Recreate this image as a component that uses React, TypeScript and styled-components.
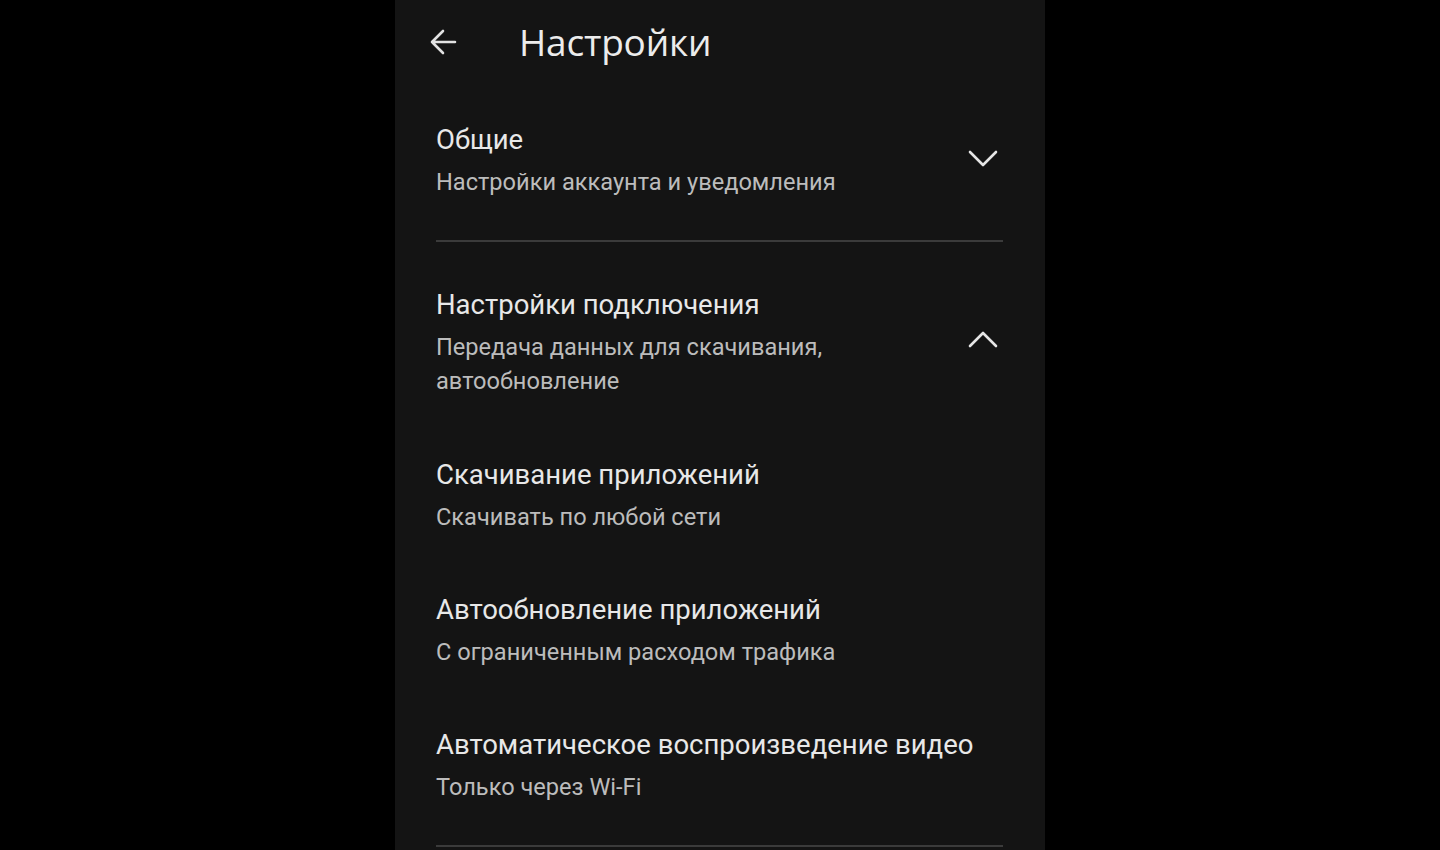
import styled, { createGlobalStyle } from 'styled-components';

const GlobalStyle = createGlobalStyle`
  html, body {
    margin: 0;
    padding: 0;
    background: #000;
  }
  body {
    font-family: Roboto, 'Noto Sans', Arial, sans-serif;
    -webkit-font-smoothing: antialiased;
  }
`;

const Page = styled.div`
  min-height: 850px;
  display: flex;
  justify-content: center;
  background: #000;
`;

const Screen = styled.div`
  width: 650px;
  height: 850px;
  background: #141414;
  overflow: hidden;
  box-sizing: border-box;
  padding: 0 42px 0 41px;
`;

const Header = styled.header`
  display: flex;
  align-items: center;
  padding-top: 20px;
  height: 44px;
  margin-bottom: 58px;
`;

const BackButton = styled.button`
  background: none;
  border: 0;
  padding: 0;
  margin-left: -9px;
  width: 32px;
  height: 32px;
  display: flex;
  align-items: center;
  justify-content: center;
  color: #e2e2e2;
  cursor: pointer;
`;

const Title = styled.h1`
  margin: 0 0 0 60px;
  font-family: 'Open Sans', Roboto, sans-serif;
  font-weight: 400;
  font-size: 37px;
  line-height: 44px;
  color: #ececec;
  letter-spacing: -0.2px;
`;

const SectionHead = styled.div`
  display: flex;
  align-items: center;
  justify-content: space-between;
`;

const TextBlock = styled.div<{ $wide?: boolean }>`
  display: flex;
  flex-direction: column;
  max-width: ${(p) => (p.$wide ? 'none' : '430px')};
`;

const ItemTitle = styled.div`
  font-size: 27.5px;
  line-height: 36px;
  color: #e8e8e8;
`;

const ItemSub = styled.div`
  margin-top: 7px;
  font-size: 23.6px;
  line-height: 34px;
  color: #bcbcbc;
`;

const Chevron = styled.span`
  display: flex;
  width: 32px;
  height: 32px;
  margin-right: 4px;
  margin-top: -6px;
  color: #e6e6e6;
`;

const Divider = styled.hr<{ $top: number; $bottom: number }>`
  border: 0;
  height: 2px;
  background: #3b3b3b;
  margin: ${(p) => p.$top}px 0 ${(p) => p.$bottom}px;
`;

const ItemList = styled.div`
  display: flex;
  flex-direction: column;
  gap: 58px;
  margin-top: 59px;
`;

const ArrowLeft = () => (
  <svg width="30" height="30" viewBox="0 0 30 30" fill="none">
    <path d="M27 15H4M15 4L4 15l11 11" stroke="currentColor" strokeWidth="2.6" strokeLinecap="round" strokeLinejoin="round" />
  </svg>
);

const ChevronIcon = ({ up }: { up?: boolean }) => (
  <svg width="32" height="32" viewBox="0 0 32 32" fill="none">
    <path
      d={up ? 'M3 22L16 9l13 13' : 'M3 10l13 13 13-13'}
      stroke="currentColor"
      strokeWidth="2.6"
      strokeLinecap="round"
      strokeLinejoin="round"
    />
  </svg>
);

const subItems = [
  { title: 'Скачивание приложений', sub: 'Скачивать по любой сети' },
  { title: 'Автообновление приложений', sub: 'С ограниченным расходом трафика' },
  { title: 'Автоматическое воспроизведение видео', sub: 'Только через Wi-Fi' },
];

export default function App() {
  return (
    <Page>
      <GlobalStyle />
      <Screen>
        <Header>
          <BackButton aria-label="Назад">
            <ArrowLeft />
          </BackButton>
          <Title>Настройки</Title>
        </Header>

        <SectionHead>
          <TextBlock>
            <ItemTitle>Общие</ItemTitle>
            <ItemSub>Настройки аккаунта и уведомления</ItemSub>
          </TextBlock>
          <Chevron>
            <ChevronIcon />
          </Chevron>
        </SectionHead>

        <Divider $top={41} $bottom={45} />

        <SectionHead>
          <TextBlock>
            <ItemTitle>Настройки подключения</ItemTitle>
            <ItemSub>Передача данных для скачивания, автообновление</ItemSub>
          </TextBlock>
          <Chevron>
            <ChevronIcon up />
          </Chevron>
        </SectionHead>

        <ItemList>
          {subItems.map((it) => (
            <TextBlock key={it.title} $wide>
              <ItemTitle>{it.title}</ItemTitle>
              <ItemSub>{it.sub}</ItemSub>
            </TextBlock>
          ))}
        </ItemList>

        <Divider $top={41} $bottom={0} />
      </Screen>
    </Page>
  );
}
